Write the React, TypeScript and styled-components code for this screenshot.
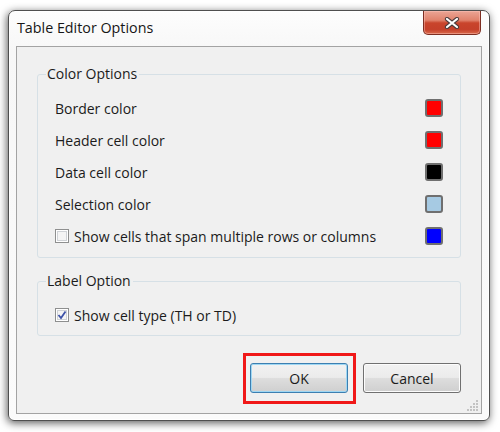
import React from 'react';
import styled, { createGlobalStyle } from 'styled-components';

const Global = createGlobalStyle`
  html, body { margin: 0; padding: 0; background: #ffffff; }
  body {
    width: 500px; height: 432px; overflow: hidden;
    font-family: "Open Sans", "Noto Sans", sans-serif;
    color: #1b1b1b;
  }
  * { box-sizing: border-box; }
`;

const Page = styled.div`
  width: 500px;
  height: 432px;
  padding: 10px 10px 11px 8px;
  display: flex;
`;

const Window = styled.div`
  flex: 1;
  display: flex;
  flex-direction: column;
  border: 1px solid #4f4f4f;
  border-radius: 7px 7px 6px 6px;
  background: linear-gradient(#fdfdfd, #f7f7f7 40px, #fbfbfb);
  box-shadow: -1px 2px 8px rgba(0, 0, 0, 0.65), inset 0 0 0 1px #ffffff;
  padding: 0 7px 6px 7px;
`;

const TitleBar = styled.div`
  height: 35px;
  display: flex;
  align-items: flex-start;
  justify-content: space-between;
  padding-left: 1px;
`;

const Title = styled.div`
  font-size: 14.3px;
  line-height: 20px;
  padding-top: 7px;
  color: #161616;
`;

const CloseButton = styled.div`
  width: 58px;
  height: 24px;
  margin-right: 1px;
  border: 1px solid #7d2e22;
  border-top: none;
  border-radius: 0 0 5px 5px;
  background: linear-gradient(#eaa595 0%, #e0826c 40%, #c9442c 52%, #c5402a 80%, #d96a4c 100%);
  box-shadow: inset 0 0 0 1px rgba(255, 200, 190, 0.45);
  display: flex;
  align-items: center;
  justify-content: center;
`;

const Client = styled.div`
  flex: 1;
  border: 1px solid #a3a3a3;
  background: #f0f0f0;
  display: flex;
  flex-direction: column;
  padding: 0 20px;
`;

const Group = styled.fieldset<{ $top: number; $bottom: number }>`
  margin: ${(p) => p.$top}px 0 0 0;
  padding: 8px 16px ${(p) => p.$bottom}px 17px;
  border: 1px solid #d6e0e6;
  border-radius: 3px;
  min-width: 0;
`;

const Legend = styled.legend`
  font-size: 14px;
  line-height: 20px;
  padding: 0 2px 0 1px;
  margin-left: -9px;
  color: #1b1b1b;
`;

const Row = styled.div`
  height: 32px;
  display: flex;
  align-items: center;
  justify-content: space-between;
  font-size: 14px;
`;

const Label = styled.span`
  display: flex;
  align-items: center;
  gap: 5px;
`;

const Swatch = styled.span<{ $color: string }>`
  width: 18px;
  height: 18px;
  border: 2px solid #6f6f6f;
  border-radius: 3px;
  background: ${(p) => p.$color};
  margin-right: 1px;
`;

const CheckBox = styled.span<{ $checked?: boolean }>`
  width: 14px;
  height: 14px;
  border: 1px solid #8e8f8f;
  background: #f4f4f4;
  box-shadow: inset 0 0 0 1px #ffffff, inset 0 0 0 2px #cfd2d6;
  display: flex;
  align-items: center;
  justify-content: center;
`;

const ButtonBar = styled.div`
  margin-top: 27px;
  display: flex;
  justify-content: flex-end;
  gap: 15px;
`;

const Button = styled.div<{ $focused?: boolean }>`
  position: relative;
  width: 98px;
  height: 30px;
  display: flex;
  align-items: center;
  justify-content: center;
  font-size: 14px;
  color: #1b1b1b;
  border: 1px solid ${(p) => (p.$focused ? '#3c7fb1' : '#707070')};
  border-radius: 3px;
  background: linear-gradient(#f2f2f2 0%, #ebebeb 48%, #dddddd 52%, #cfcfcf 100%);
  box-shadow: inset 0 0 0 1px ${(p) => (p.$focused ? '#9fd7f3' : '#fcfcfc')};
`;

const Highlight = styled.span`
  position: absolute;
  top: -11px;
  bottom: -12px;
  left: -8px;
  right: -9px;
  border: 3px solid #f01818;
  pointer-events: none;
`;

const GripRow = styled.div`
  flex: 1;
  display: flex;
  align-items: flex-end;
  justify-content: flex-end;
  margin-right: -20px;
  padding: 0 2px 2px 0;
`;

const XIcon = () => (
  <svg width="16" height="12" viewBox="0 0 16 12">
    <path d="M3 2 L13 10 M13 2 L3 10" stroke="#4a3b3b" strokeWidth="4.2" strokeLinecap="round" />
    <path d="M3 2 L13 10 M13 2 L3 10" stroke="#ffffff" strokeWidth="2.2" strokeLinecap="round" />
  </svg>
);

const CheckMark = () => (
  <svg width="10" height="10" viewBox="0 0 10 10">
    <path d="M1.5 5 L4 8 L8.5 1.5" fill="none" stroke="#3d52a8" strokeWidth="1.8" />
  </svg>
);

const Grip = () => (
  <svg width="12" height="12" viewBox="0 0 12 12">
    {[
      [9, 1],
      [6, 4],
      [9, 4],
      [3, 7],
      [6, 7],
      [9, 7],
      [0, 10],
      [3, 10],
      [6, 10],
      [9, 10],
    ].map(([x, y], i) => (
      <rect key={i} x={x} y={y} width="2" height="2" fill="#c3c3c3" />
    ))}
  </svg>
);

const colorRows = [
  { label: 'Border color', color: '#ff0000' },
  { label: 'Header cell color', color: '#ff0000' },
  { label: 'Data cell color', color: '#000000' },
  { label: 'Selection color', color: '#a6cae3' },
];

export default function App() {
  return (
    <>
      <Global />
      <Page>
        <Window>
          <TitleBar>
            <Title>Table Editor Options</Title>
            <CloseButton>
              <XIcon />
            </CloseButton>
          </TitleBar>
          <Client>
            <Group $top={17} $bottom={5}>
              <Legend>Color Options</Legend>
              {colorRows.map((r) => (
                <Row key={r.label}>
                  <Label>{r.label}</Label>
                  <Swatch $color={r.color} />
                </Row>
              ))}
              <Row>
                <Label>
                  <CheckBox />
                  Show cells that span multiple rows or columns
                </Label>
                <Swatch $color="#0000ff" />
              </Row>
            </Group>
            <Group $top={13} $bottom={4}>
              <Legend>Label Option</Legend>
              <Row>
                <Label>
                  <CheckBox $checked>
                    <CheckMark />
                  </CheckBox>
                  Show cell type (TH or TD)
                </Label>
              </Row>
            </Group>
            <ButtonBar>
              <Button $focused>
                OK
                <Highlight />
              </Button>
              <Button>Cancel</Button>
            </ButtonBar>
            <GripRow>
              <Grip />
            </GripRow>
          </Client>
        </Window>
      </Page>
    </>
  );
}
